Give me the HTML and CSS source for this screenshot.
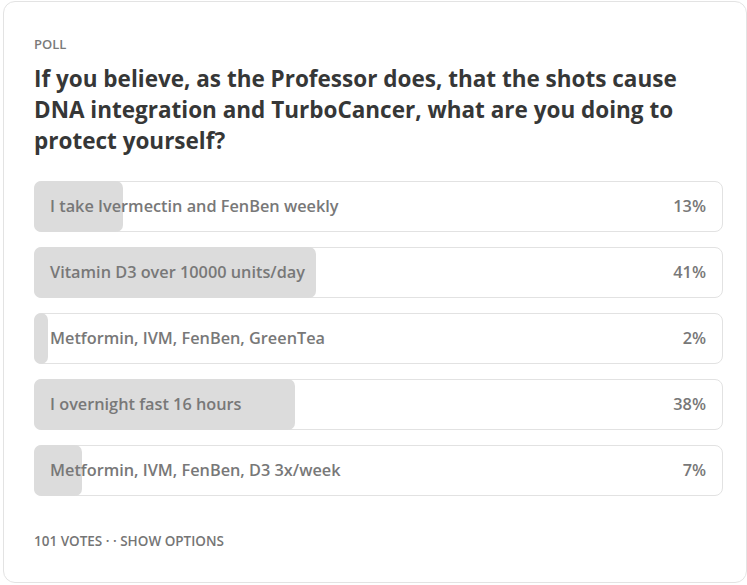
FILE: index.html
```html
<!DOCTYPE html>
<html>
<head>
<meta charset="utf-8">
<link rel="stylesheet" href="styles.css">
</head>
<body>
<div class="card">
  <div class="label">POLL</div>
  <h1 class="question">If you believe, as the Professor does, that the shots cause DNA integration and TurboCancer, what are you doing to protect yourself?</h1>
  <div class="options">
    <div class="option"><div class="fill" style="width:13%"></div><span class="text">I take Ivermectin and FenBen weekly</span><span class="pct">13%</span></div>
    <div class="option"><div class="fill" style="width:41%"></div><span class="text">Vitamin D3 over 10000 units/day</span><span class="pct">41%</span></div>
    <div class="option"><div class="fill" style="width:2%"></div><span class="text">Metformin, IVM, FenBen, GreenTea</span><span class="pct">2%</span></div>
    <div class="option"><div class="fill" style="width:38%"></div><span class="text">I overnight fast 16 hours</span><span class="pct">38%</span></div>
    <div class="option"><div class="fill" style="width:7%"></div><span class="text">Metformin, IVM, FenBen, D3 3x/week</span><span class="pct">7%</span></div>
  </div>
  <div class="footer">101 VOTES · · SHOW OPTIONS</div>
</div>
</body>
</html>
```
FILE: styles.css
```css
html, body {
  margin: 0;
  padding: 0;
  background: #ffffff;
}
body {
  font-family: "Open Sans", "Noto Sans", sans-serif;
}
.card {
  box-sizing: border-box;
  margin: 1px 0 0 3px;
  width: 744px;
  height: 582px;
  border: 1px solid #e3e3e3;
  border-radius: 12px;
  padding: 33px 23px 0 30px;
}
.label {
  font-size: 13px;
  font-weight: 600;
  color: #7a7a7a;
  line-height: 18px;
}
.question {
  margin: 10px 0 0 0;
  font-size: 22.5px;
  font-weight: 700;
  line-height: 31px;
  color: #363737;
  padding-right: 40px;
}
.options {
  margin-top: 25px;
  display: flex;
  flex-direction: column;
  gap: 15px;
}
.option {
  position: relative;
  box-sizing: border-box;
  height: 51px;
  border: 1px solid #e2e2e2;
  border-radius: 8px;
  display: flex;
  align-items: center;
  justify-content: space-between;
  padding: 0 16px 2px 15px;
  font-size: 16.3px;
  color: #787878;
  font-weight: 600;
}
.fill {
  position: absolute;
  left: -1px;
  top: -1px;
  bottom: -1px;
  background: #dcdcdc;
  border-radius: 7px;
}
.text, .pct {
  position: relative;
}
.footer {
  margin-top: 36px;
  font-size: 13.5px;
  font-weight: 600;
  color: #757575;
  line-height: 18px;
}
```
